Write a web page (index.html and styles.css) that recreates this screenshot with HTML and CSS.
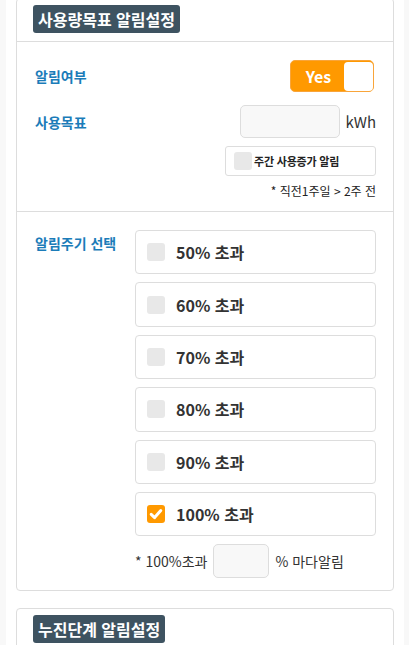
FILE: index.html
```html
<!DOCTYPE html>
<html lang="ko">
<head>
<meta charset="utf-8">
<title>알림설정</title>
<link rel="stylesheet" href="styles.css">
</head>
<body>
<div class="page">
  <section class="card card-first">
    <div class="card-head"><span class="badge">사용량목표 알림설정</span></div>
    <div class="sec sec-goal">
      <div class="row row-toggle">
        <span class="lbl">알림여부</span>
        <div class="toggle"><span class="toggle-txt">Yes</span><span class="knob"></span></div>
      </div>
      <div class="row row-goal">
        <span class="lbl">사용목표</span>
        <div class="goal-input"><span class="inp inp-goal"></span><span class="unit">kWh</span></div>
      </div>
      <div class="weekly-wrap">
        <div class="weekly"><span class="chk chk-sm"></span><span class="weekly-txt">주간 사용증가 알림</span></div>
      </div>
      <p class="note">* 직전1주일 &gt; 2주 전</p>
    </div>
    <div class="sec sec-cycle">
      <span class="lbl lbl-cycle">알림주기 선택</span>
      <div class="opts">
        <div class="opt"><span class="chk"></span><span class="opt-txt">50% 초과</span></div>
        <div class="opt"><span class="chk"></span><span class="opt-txt">60% 초과</span></div>
        <div class="opt"><span class="chk"></span><span class="opt-txt">70% 초과</span></div>
        <div class="opt"><span class="chk"></span><span class="opt-txt">80% 초과</span></div>
        <div class="opt"><span class="chk"></span><span class="opt-txt">90% 초과</span></div>
        <div class="opt"><span class="chk chk-on"><svg viewBox="0 0 18 18" width="18" height="18"><path d="M4.2 9.4 L7.6 12.6 L13.8 5.6" fill="none" stroke="#fff" stroke-width="3" stroke-linecap="round" stroke-linejoin="round"/></svg></span><span class="opt-txt">100% 초과</span></div>
        <div class="every">
          <span>* 100%초과</span><span class="inp inp-every"></span><span>% 마다알림</span>
        </div>
      </div>
    </div>
  </section>
  <section class="card">
    <div class="card-head"><span class="badge">누진단계 알림설정</span></div>
    <div class="sec sec-empty"></div>
  </section>
</div>
</body>
</html>
```

FILE: styles.css
```css
html, body {
  margin: 0;
  padding: 0;
  background: #f8f8f8;
  font-family: "Noto Sans CJK KR", "Noto Sans", sans-serif;
  color: #333;
  overflow: hidden;
}
.page {
  margin-left: 6px;
  width: 378px;
  padding: 0 10px;
  background: #fff;
  min-height: 700px;
}
.card {
  border: 1px solid #ddd;
  border-radius: 4px;
  background: #fff;
  margin-bottom: 17px;
}
.card-first {
  margin-top: -2px;
}
.card-head {
  padding: 6px 16px 8px;
  border-bottom: 1px solid #ddd;
  display: flex;
}
.badge {
  display: inline-block;
  height: 28px;
  line-height: 28px;
  padding: 0 5px;
  background: #3e5361;
  color: #fff;
  font-weight: 700;
  font-size: 16px;
  border-radius: 3px;
}
.sec {
  padding: 18px 17px 0 18px;
}
.sec-goal {
  padding-bottom: 11px;
  border-bottom: 1px solid #ddd;
}
.row {
  display: flex;
  align-items: center;
  justify-content: space-between;
}
.lbl {
  color: #1b7cb9;
  font-weight: 700;
  font-size: 14px;
  line-height: 20px;
}
.toggle {
  width: 82px;
  height: 30px;
  border: 1px solid #f9a53a;
  border-radius: 5px;
  background: #ff9900;
  display: flex;
  align-items: center;
  margin-right: 2px;
  padding: 0;
}
.toggle-txt {
  flex: 1;
  text-align: center;
  color: #fff;
  font-weight: 700;
  font-size: 16px;
  line-height: 30px;
  padding-left: 2px;
}
.knob {
  width: 29px;
  height: 29px;
  background: #fff;
  border-radius: 4px;
  margin-right: 0;
}
.row-goal {
  margin-top: 13px;
}
.goal-input {
  display: flex;
  align-items: center;
  gap: 5px;
}
.inp {
  display: block;
  background: #f8f8f8;
  border: 1px solid #ddd;
  border-radius: 5px;
  box-sizing: border-box;
}
.inp-goal {
  width: 100px;
  height: 33px;
}
.unit {
  font-size: 15px;
  color: #333;
}
.weekly-wrap {
  display: flex;
  justify-content: flex-end;
  margin-top: 8px;
}
.weekly {
  box-sizing: border-box;
  width: 151px;
  height: 30px;
  border: 1px solid #ddd;
  border-radius: 3px;
  display: flex;
  align-items: center;
  padding-left: 8px;
}
.chk {
  width: 18px;
  height: 18px;
  border-radius: 3px;
  background: #e8e8e8;
  flex: none;
  display: block;
}
.chk svg {
  display: block;
}
.chk-on {
  background: #ff9900;
}
.weekly-txt {
  font-size: 11px;
  font-weight: 700;
  color: #222;
  margin-left: 2px;
  letter-spacing: -0.2px;
}
.note {
  margin: 6px 0 0;
  text-align: right;
  font-size: 12px;
  line-height: 18px;
  color: #222;
}
.sec-cycle {
  display: flex;
  align-items: flex-start;
  padding-bottom: 12px;
}
.lbl-cycle {
  width: 100px;
  flex: none;
  margin-top: 3px;
}
.opts {
  flex: 1;
  display: flex;
  flex-direction: column;
}
.opt {
  box-sizing: border-box;
  height: 44.4px;
  margin-bottom: 8px;
  border: 1px solid #ddd;
  border-radius: 4px;
  display: flex;
  align-items: center;
  padding-left: 11px;
}
.opt-txt {
  margin-left: 11px;
  font-weight: 700;
  font-size: 16px;
  color: #333;
}
.every {
  display: flex;
  align-items: center;
  gap: 6px;
  font-size: 14px;
  color: #333;
}
.inp-every {
  width: 56px;
  height: 34px;
}
.sec-empty {
  height: 40px;
}
```
